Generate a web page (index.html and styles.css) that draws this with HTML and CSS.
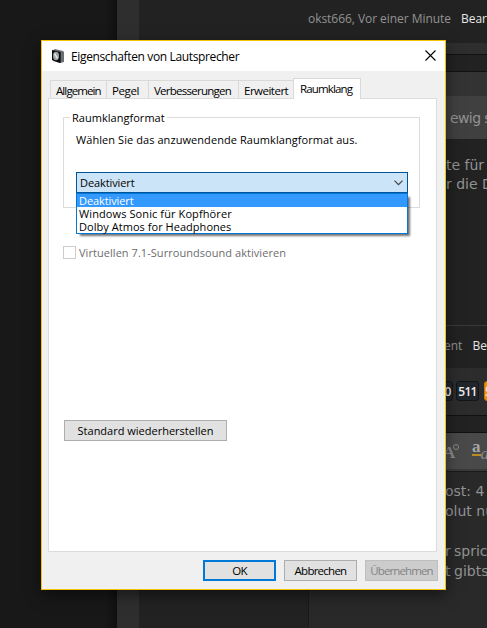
FILE: index.html
```html
<!DOCTYPE html>
<html lang="de">
<head>
  <meta charset="utf-8">
  <title>Eigenschaften von Lautsprecher</title>
  <link rel="stylesheet" href="styles.css">
</head>
<body>
  <div class="forum">
    <div class="sidebar"></div>
    <div class="gutter"></div>
    <div class="thread">
      <div class="post-meta first"><span class="author">okst666, Vor einer Minute</span><span class="action">Bear</span></div>
      <div class="gap"></div>
      <div class="spacer"></div>
      <div class="quote-head"></div>
      <div class="quote">ewig s</div>
      <div class="post-body">
        <div class="line">te für</div>
        <div class="line">r die D</div>
      </div>
      <div class="post-meta"><span class="author">ent</span><span class="action">Bea</span></div>
      <div class="pager">
        <span class="page">0</span>
        <span class="page">511</span>
        <span class="page current">5</span>
      </div>
      <div class="spacer low"></div>
      <div class="toolbar">
        <span class="tool">A<span class="ring"></span></span>
        <span class="tool second"><span class="small-a">a</span><i>a</i></span>
      </div>
      <div class="reply">
        <div class="reply-user"></div>
        <div class="editor">
          <div>ost: 4</div>
          <div>olut nu</div>
          <div>&nbsp;</div>
          <div><span class="cut">r</span>spric</div>
          <div><span class="cut">t</span>gibts</div>
        </div>
      </div>
    </div>
  </div>

  <div class="window">
    <div class="titlebar">
      <svg class="app-icon" width="14" height="15" viewBox="0 0 14 15">
        <path d="M1 2 L4 0 L12 2 L13 3 L13 13 L9 14 L2 12 Z" fill="#6c6e75"/>
        <path d="M1 1 L9 3 L9 14 L1 11 Z" fill="#0c0c0c"/>
        <ellipse cx="5" cy="7" rx="3" ry="4.2" fill="#9aa1a2"/>
        <path d="M3.5 4.5 L6.5 9.5" stroke="#e2e6e5" stroke-width="1.5"/>
        <path d="M9.5 3 V14" stroke="#2b2d31"/>
      </svg>
      <span class="title">Eigenschaften von Lautsprecher</span>
      <svg class="close" width="11" height="11" viewBox="0 0 11 11">
        <path d="M0.5 0.5 L10.5 10.5 M10.5 0.5 L0.5 10.5" stroke="#000" stroke-width="1.1"/>
      </svg>
    </div>

    <div class="tabs">
      <div class="tab general">Allgemein</div>
      <div class="tab level">Pegel</div>
      <div class="tab enhance">Verbesserungen</div>
      <div class="tab advanced">Erweitert</div>
      <div class="tab active">Raumklang</div>
    </div>

    <div class="tab-page">
      <div class="group">
        <div class="legend"><span class="legend-text">Raumklangformat</span></div>
        <div class="hint">Wählen Sie das anzuwendende Raumklangformat aus.</div>
        <div class="combo">
          <span class="combo-value">Deaktiviert</span>
          <svg width="9" height="6" viewBox="0 0 9 6">
            <path d="M0.5 0.7 L4.5 4.7 L8.5 0.7" fill="none" stroke="#444" stroke-width="1.2"/>
          </svg>
          <div class="dropdown">
            <div class="option selected">Deaktiviert</div>
            <div class="option sonic">Windows Sonic für Kopfhörer</div>
            <div class="option dolby">Dolby Atmos for Headphones</div>
          </div>
        </div>
      </div>
      <div class="check-row">
        <span class="checkbox"></span>
        <span class="check-label">Virtuellen 7.1-Surroundsound aktivieren</span>
      </div>
      <div class="btn restore">Standard wiederherstellen</div>
    </div>

    <div class="buttons">
      <div class="btn default">OK</div>
      <div class="btn cancel">Abbrechen</div>
      <div class="btn disabled">Übernehmen</div>
    </div>
  </div>
</body>
</html>
```
FILE: styles.css
```css
* {
  box-sizing: border-box;
}

body {
  margin: 0;
  width: 487px;
  height: 628px;
  overflow: hidden;
  position: relative;
  background: #181818;
  font-family: "Open Sans", "Noto Sans", sans-serif;
  font-size: 11px;
  color: #000;
}

/* forum behind the dialog */
.forum {
  display: flex;
  height: 628px;
}

.sidebar {
  width: 117px;
  background: linear-gradient(90deg, #181818 90%, #101010);
}

.gutter {
  width: 22px;
  background: #2e2e2e;
}

.thread {
  width: 348px;
  background: #222;
  overflow: hidden;
  white-space: nowrap;
  color: #929292;
}

.post-meta {
  display: flex;
  gap: 10px;
  height: 43px;
  padding-left: 305px;
  line-height: 39px;
  font-size: 12px;
  border-top: 1px solid #393939;
}

.post-meta.first {
  padding-left: 169px;
  line-height: 38px;
  border-top: none;
}

.first .author {
  width: 144px;
  letter-spacing: -0.05px;
}

.action {
  color: #e6e6e6;
}

.gap {
  height: 11px;
  background: #2e2e2e;
}

.spacer {
  height: 18px;
  border-top: 1px solid #111;
  border-bottom: 1px solid #111;
}

.quote-head {
  height: 24px;
  background: #333;
}

.quote {
  height: 43px;
  padding-left: 311px;
  line-height: 44px;
  background: #404040;
  font-family: "DejaVu Sans", sans-serif;
  font-size: 14px;
  letter-spacing: -0.6px;
}

.post-body {
  height: 186px;
  padding: 17px 0 0 307px;
  font-family: "DejaVu Sans", sans-serif;
  font-size: 14px;
}

.line {
  line-height: 19px;
}

.pager {
  display: flex;
  gap: 3px;
  height: 47px;
  padding: 13px 0 0 300px;
  background: #2c2c2c;
}

.page {
  flex: none;
  width: 23px;
  height: 20px;
  border: 1px solid #12151a;
  border-radius: 3px;
  background: #20242b;
  color: #eee;
  font-size: 12px;
  font-weight: 600;
  line-height: 20px;
  letter-spacing: -0.7px;
  text-align: center;
}

.page:first-child {
  width: 14px;
  padding-left: 3px;
}

.page.current {
  margin-left: 2px;
  background: #ef9208;
  border-color: #c97800;
  text-align: left;
}

.spacer.low {
  height: 18px;
}

.toolbar {
  display: flex;
  height: 38px;
  padding: 4px 0 0 304px;
  background: #494949;
  border-bottom: 2px solid #393939;
  font-family: "Liberation Serif", serif;
  font-size: 17px;
  color: #898989;
}

.tool {
  display: flex;
  flex: none;
  width: 29px;
  line-height: 32px;
  font-weight: bold;
}

.ring {
  width: 6px;
  height: 6px;
  margin: 7px 0 0 -2px;
  border: 1px solid #898989;
  border-radius: 50%;
}

.small-a {
  height: 15px;
  margin-top: 4px;
  line-height: 12px;
  color: #a5a5a5;
  border-bottom: 2px solid #b98b22;
}

.tool i {
  font-weight: normal;
  line-height: 34px;
}

.reply {
  display: flex;
  height: 157px;
  border-top: 1px solid #1b1b1b;
}

.reply-user {
  flex: none;
  width: 170px;
  border-right: 1px solid #1a1a1a;
}

.editor {
  flex: none;
  width: 178px;
  padding: 9px 0 0 136px;
  background: #292929;
  font-family: "DejaVu Sans", sans-serif;
  font-size: 14px;
  line-height: 20px;
}

.cut {
  display: inline-block;
  width: 9px;
}

/* dialog window */
.window {
  position: absolute;
  left: 41px;
  top: 40px;
  width: 405px;
  height: 550px;
  border: 1px solid #f5c400;
  background: #f0f0f0;
  box-shadow: 0 5px 14px rgba(0, 0, 0, 0.5);
  white-space: nowrap;
}

.titlebar {
  display: flex;
  align-items: center;
  height: 30px;
  padding: 0 9px 0 9px;
  background: #fff;
}

.app-icon {
  margin-right: 6px;
}

.title {
  font-size: 12px;
  letter-spacing: -0.36px;
}

.close {
  margin: -2px 0 0 auto;
}

.tabs {
  display: flex;
  align-items: flex-end;
  height: 27px;
  padding-left: 8px;
}

.tab {
  height: 18px;
  border: 1px solid #d9d9d9;
  border-right: none;
  border-bottom: none;
  padding-left: 5px;
  line-height: 19px;
  font-size: 11.5px;
}

.general {
  width: 56px;
  letter-spacing: -0.9px;
}

.level {
  width: 42px;
  letter-spacing: -0.4px;
}

.enhance {
  width: 90px;
  letter-spacing: -0.75px;
}

.advanced {
  width: 55px;
  letter-spacing: -0.5px;
}

.tab.active {
  z-index: 1;
  width: 68px;
  height: 21px;
  margin-bottom: -1px;
  padding-left: 6px;
  border-right: 1px solid #d9d9d9;
  background: #fff;
  letter-spacing: -0.85px;
}

.tab-page {
  width: 389px;
  height: 454px;
  margin-left: 6px;
  padding: 18px 0 0 14px;
  border: 1px solid #dcdcdc;
  background: #fff;
}

.group {
  width: 357px;
  height: 91px;
  padding: 0 11px 0 12px;
  border: 1px solid #dcdcdc;
}

.legend {
  height: 15px;
  margin: -8px 0 0 -6px;
  line-height: 16px;
}

.legend-text {
  display: inline-block;
  height: 15px;
  padding: 0 2px;
  background: #fff;
  letter-spacing: 0.03px;
}

.hint {
  margin-top: 7px;
  line-height: 16px;
  letter-spacing: 0.07px;
}

.combo {
  display: flex;
  position: relative;
  align-items: center;
  justify-content: space-between;
  width: 332px;
  height: 21px;
  margin-top: 24px;
  padding: 0 4px 0 3px;
  border: 1px solid #005499;
  background: #cce4f7;
}

.combo-value,
.option.selected {
  letter-spacing: -0.1px;
}

/* opened list lies over the group border */
.dropdown {
  position: absolute;
  left: -1px;
  top: 20px;
  width: 332px;
  height: 41px;
  border: 1px solid #0078d7;
  background: #fff;
  box-shadow: 3px 3px 2px -1px rgba(0, 0, 0, 0.55);
}

.option {
  height: 13px;
  padding-left: 2px;
  line-height: 14px;
}

.option.selected {
  background: #3399ff;
  color: #fff;
}

.sonic {
  letter-spacing: 0.1px;
}

.dolby {
  letter-spacing: 0.04px;
}

.check-row {
  display: flex;
  align-items: center;
  height: 13px;
  margin-top: 38px;
}

.checkbox {
  width: 13px;
  height: 13px;
  margin-right: 3px;
  border: 1px solid #ccc;
}

.check-label {
  color: #6d6d6d;
  letter-spacing: 0.05px;
}

.btn {
  height: 21px;
  border: 1px solid #adadad;
  background: #e1e1e1;
  line-height: 20px;
  text-align: center;
}

.restore {
  width: 163px;
  margin: 161px 0 0 1px;
}

.buttons {
  display: flex;
  justify-content: flex-end;
  gap: 8px;
  padding: 8px 7px 0 0;
}

.buttons .btn {
  width: 73px;
  font-size: 11.5px;
  line-height: 20px;
  letter-spacing: -0.75px;
}

.buttons .default {
  border: 2px solid #0078d7;
  line-height: 18px;
}

.buttons .disabled {
  border-color: #bfbfbf;
  background: #ccc;
  color: #838383;
  letter-spacing: -0.9px;
}
```
